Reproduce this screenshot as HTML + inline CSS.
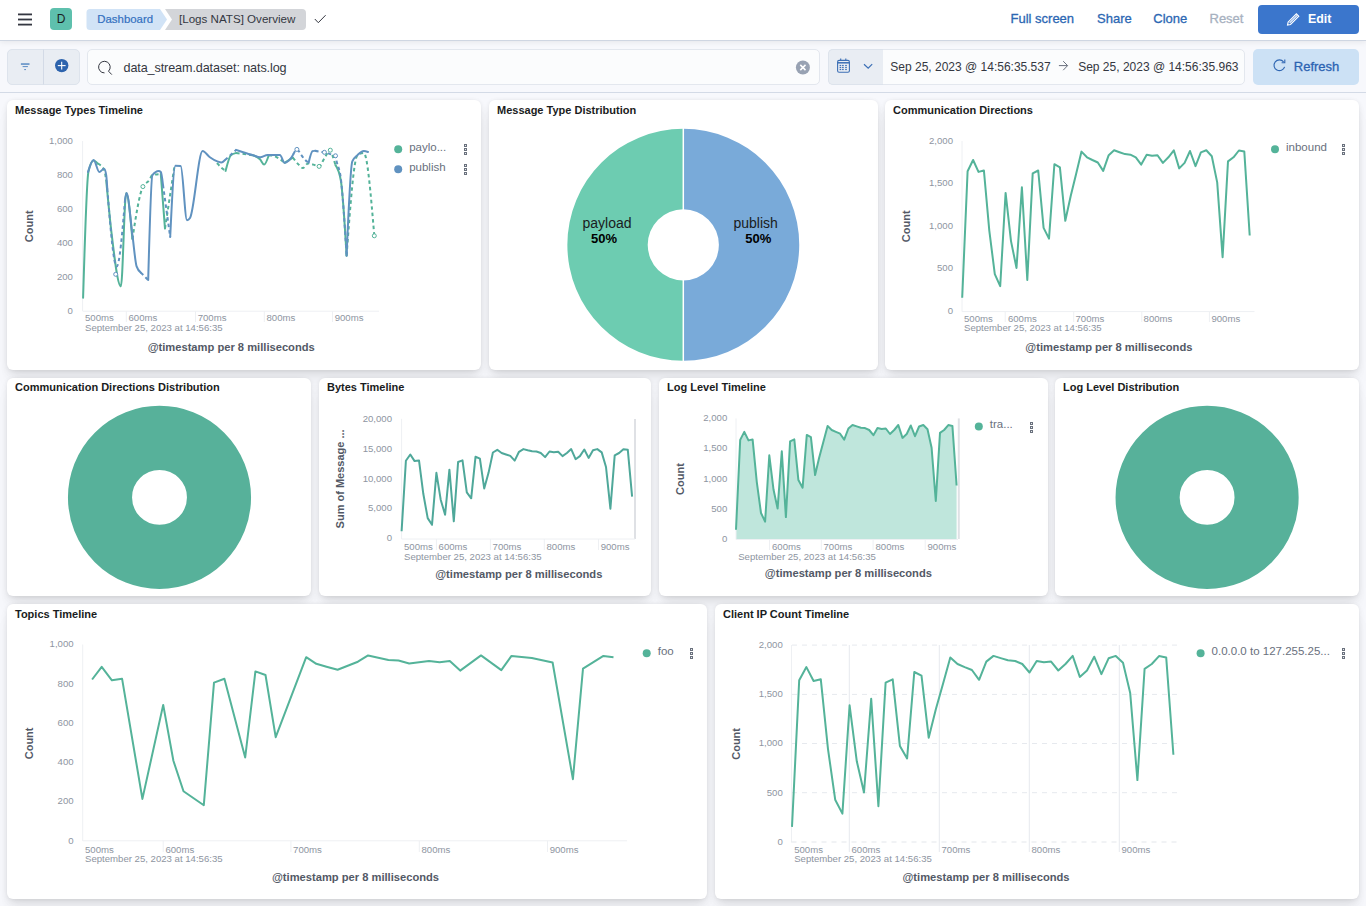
<!DOCTYPE html>
<html><head><meta charset="utf-8">
<style>
*{box-sizing:border-box;margin:0;padding:0}
html,body{width:1366px;height:906px;overflow:hidden;background:#f7f8fc;font-family:"Liberation Sans",sans-serif;position:relative}
.abs{position:absolute}
.hdr{left:0;top:0;width:1366px;height:40px;background:#fff;box-shadow:0 1px 0 #cfd6e2,0 2px 6px rgba(0,0,0,.08)}
.t{position:absolute;white-space:nowrap;line-height:1}
.panel{position:absolute;background:#fff;border-radius:6px;box-shadow:0 0.9px 4px -1px rgba(0,0,0,.08),0 2.6px 8px -1px rgba(0,0,0,.06),0 5.7px 12px -1px rgba(0,0,0,.045),0 15px 15px -1px rgba(0,0,0,.04)}
.ptitle{position:absolute;left:8px;top:4px;font-size:11px;font-weight:bold;color:#1a1c21;white-space:nowrap}
svg{position:absolute;left:0;top:0}
</style></head><body>
<!-- header -->
<div class="abs hdr"></div>
<div class="abs" style="left:0;top:92px;width:1366px;height:1px;background:#d3dae6"></div>
<div class="abs" style="left:7px;top:49px;width:73px;height:36px;border-radius:5px;background:#e9edf3;border:1px solid #dde3ec"></div>
<div class="abs" style="left:87px;top:49px;width:733px;height:36px;border-radius:5px;background:#fbfcfd;border:1px solid #e3e7ee"></div>
<div class="abs" style="left:828px;top:49px;width:417px;height:36px;border-radius:5px;background:#fbfcfd;border:1px solid #e3e7ee"></div>
<div class="abs" style="left:828px;top:49px;width:55px;height:36px;border-radius:5px 0 0 5px;background:#e9edf3;border:1px solid #dde3ec;border-right:none"></div>
<div class="abs" style="left:1253px;top:49px;width:106px;height:36px;border-radius:5px;background:#cce1f5"></div>
<div class="abs" style="left:1258px;top:5px;width:101px;height:28.5px;border-radius:4px;background:#3b76cc"></div>
<svg width="1366" height="100" style="left:0;top:0">
<g fill="#343741"><rect x="18" y="13.5" width="14" height="1.8"/><rect x="18" y="18.6" width="14" height="1.8"/><rect x="18" y="23.7" width="14" height="1.8"/></g>
<rect x="50" y="8" width="22" height="22" rx="4" fill="#5ec0ad"/>
<text x="61" y="23.3" font-size="12" text-anchor="middle" fill="#1a1c21" font-family="Liberation Sans">D</text>
<path d="M90 9 H160 L167 19.5 L160 30 H90 Q86.5 30 86.5 26.5 V12.5 Q86.5 9 90 9Z" fill="#d1e3f6"/>
<path d="M165 9 H302 Q306 9 306 13 V26 Q306 30 302 30 H165 L172 19.5Z" fill="#d3d5d9"/>
<path d="M314.8 19 L318.3 22.7 L325.6 15.2" fill="none" stroke="#343741" stroke-width="1"/>
<text x="97.3" y="23.3" font-size="11.4" fill="#3370c0" stroke="#3370c0" stroke-width="0.2" font-family="Liberation Sans">Dashboard</text>
<text x="179" y="23.3" font-size="11.6" fill="#343741" font-family="Liberation Sans">[Logs NATS] Overview</text>
<g font-family="Liberation Sans" font-size="13" fill="#2c67b3" stroke="#2c67b3" stroke-width="0.3">
<text x="1010.5" y="22.9">Full screen</text>
<text x="1097" y="22.9">Share</text>
<text x="1153.3" y="22.9">Clone</text>
<text x="1209.5" y="22.9" fill="#a7b1c0" stroke="#a7b1c0">Reset</text>
</g>
<text x="1308" y="22.9" font-size="12.4" font-weight="bold" fill="#fff" font-family="Liberation Sans">Edit</text>
<g transform="translate(1293.2,19.4) rotate(-45)" fill="none" stroke="#fff" stroke-width="1.1"><path d="M-5.5,-1.7 H6.2 V1.7 H-5.5 L-8,0 Z"/><line x1="-5" y1="0" x2="6" y2="0"/></g>
<!-- filter bar icons -->
<line x1="43.5" y1="49.5" x2="43.5" y2="84.5" stroke="#d3dae6" stroke-width="1"/>
<g fill="#6a96c9"><rect x="20.9" y="63.2" width="8.6" height="1.7"/><rect x="22.6" y="66" width="5.3" height="1.1"/><rect x="24.2" y="69" width="1.8" height="1.1"/></g>
<circle cx="61.7" cy="65.6" r="6.7" fill="#2d63ad"/>
<g stroke="#fff" stroke-width="1.1"><line x1="57.8" y1="65.6" x2="65.6" y2="65.6"/><line x1="61.7" y1="61.7" x2="61.7" y2="69.5"/></g>
<path d="M104.5,72.9 A5.8,5.8 0 1,1 108.5,71.2 L111.8,74.6" fill="none" stroke="#343741" stroke-width="1"/>
<text x="123.5" y="72" font-size="12.6" letter-spacing="-0.1" fill="#343741" font-family="Liberation Sans">data_stream.dataset: nats.log</text>
<circle cx="802.9" cy="67.5" r="7" fill="#98a2b3"/>
<g stroke="#fff" stroke-width="1.5"><line x1="800.3" y1="64.9" x2="805.5" y2="70.1"/><line x1="805.5" y1="64.9" x2="800.3" y2="70.1"/></g>
<g fill="none" stroke="#3c6fb5"><rect x="837.6" y="60.4" width="11.8" height="11.8" rx="1.5" stroke-width="1.1"/><line x1="837.6" y1="62.8" x2="849.4" y2="62.8" stroke-width="1.5"/><line x1="840.7" y1="58.6" x2="840.7" y2="61" stroke-width="1.1"/><line x1="845.8" y1="58.6" x2="845.8" y2="61" stroke-width="1.1"/></g>
<g fill="#3c6fb5"><rect x="839.6" y="64.9" width="1.6" height="1.2"/><rect x="842.1" y="64.9" width="1.6" height="1.2"/><rect x="845.2" y="64.9" width="1.6" height="1.2"/><rect x="839.6" y="66.9" width="1.6" height="1.2"/><rect x="842.1" y="66.9" width="1.6" height="1.2"/><rect x="845.2" y="66.9" width="1.6" height="1.2"/><rect x="839.6" y="68.9" width="1.6" height="1.2"/><rect x="842.1" y="68.9" width="1.6" height="1.2"/><rect x="845.2" y="68.9" width="1.6" height="1.2"/></g>
<path d="M864,64.2 L868.2,68.2 L872.2,64.2" fill="none" stroke="#3c6fb5" stroke-width="1.2"/>
<g font-family="Liberation Sans" font-size="12" fill="#343741">
<text x="890.3" y="71.2">Sep 25, 2023 @ 14:56:35.537</text>
<text x="1078.2" y="71.2">Sep 25, 2023 @ 14:56:35.963</text>
</g>
<g fill="none" stroke="#69707d" stroke-width="1"><line x1="1058.9" y1="65.6" x2="1067.5" y2="65.6"/><path d="M1063.2,61.2 L1067.6,65.6 L1063.2,70.2"/></g>
<path d="M1283.6,61.8 A5.4,5.4 0 1,0 1284.6,66.8" fill="none" stroke="#2f66b2" stroke-width="1.1"/>
<path d="M1284.8,59.6 V62.8 H1281.6" fill="none" stroke="#2f66b2" stroke-width="1.1"/>
<text x="1293.8" y="70.8" font-size="13" fill="#2b63b2" stroke="#2b63b2" stroke-width="0.3" font-family="Liberation Sans">Refresh</text>
</svg>

<!-- panels -->
<div class="panel" style="left:7px;top:100px;width:474px;height:270px"><div class="ptitle">Message Types Timeline</div></div>
<div class="panel" style="left:489px;top:100px;width:389px;height:270px"><div class="ptitle">Message Type Distribution</div></div>
<div class="panel" style="left:885px;top:100px;width:474px;height:270px"><div class="ptitle">Communication Directions</div></div>
<div class="panel" style="left:7px;top:378px;width:304px;height:218px"><div class="ptitle" style="top:3px">Communication Directions Distribution</div></div>
<div class="panel" style="left:319px;top:378px;width:332px;height:218px"><div class="ptitle" style="top:3px">Bytes Timeline</div></div>
<div class="panel" style="left:659px;top:378px;width:389px;height:218px"><div class="ptitle" style="top:3px">Log Level Timeline</div></div>
<div class="panel" style="left:1055px;top:378px;width:304px;height:218px"><div class="ptitle" style="top:3px">Log Level Distribution</div></div>
<div class="panel" style="left:7px;top:604px;width:700px;height:295px"><div class="ptitle">Topics Timeline</div></div>
<div class="panel" style="left:715px;top:604px;width:644px;height:295px"><div class="ptitle">Client IP Count Timeline</div></div>

<!-- charts overlay -->
<svg id="charts" width="1366" height="906" viewBox="0 0 1366 906">
<line x1="962.0" y1="141.0" x2="962.0" y2="311.6" stroke="#eef0f3" stroke-width="1"/>
<line x1="962.0" y1="311.6" x2="1254.5" y2="311.6" stroke="#eef0f3" stroke-width="1"/>
<line x1="1005.2" y1="311.6" x2="1005.2" y2="322.0" stroke="#eef0f3" stroke-width="1"/>
<line x1="1073.7" y1="311.6" x2="1073.7" y2="322.0" stroke="#eef0f3" stroke-width="1"/>
<line x1="1141.8" y1="311.6" x2="1141.8" y2="322.0" stroke="#eef0f3" stroke-width="1"/>
<line x1="1209.4" y1="311.6" x2="1209.4" y2="322.0" stroke="#eef0f3" stroke-width="1"/>
<text x="964.0" y="321.8" font-size="9.6" fill="#8e95a1" text-anchor="start" font-weight="normal" font-family='"Liberation Sans",sans-serif' >500ms</text>
<text x="1007.9" y="321.8" font-size="9.6" fill="#8e95a1" text-anchor="start" font-weight="normal" font-family='"Liberation Sans",sans-serif' >600ms</text>
<text x="1075.5" y="321.8" font-size="9.6" fill="#8e95a1" text-anchor="start" font-weight="normal" font-family='"Liberation Sans",sans-serif' >700ms</text>
<text x="1143.6" y="321.8" font-size="9.6" fill="#8e95a1" text-anchor="start" font-weight="normal" font-family='"Liberation Sans",sans-serif' >800ms</text>
<text x="1211.4" y="321.8" font-size="9.6" fill="#8e95a1" text-anchor="start" font-weight="normal" font-family='"Liberation Sans",sans-serif' >900ms</text>
<text x="964.0" y="330.9" font-size="9.6" fill="#8e95a1" text-anchor="start" font-weight="normal" font-family='"Liberation Sans",sans-serif' >September 25, 2023 at 14:56:35</text>
<text x="953.0" y="143.9" font-size="9.6" fill="#8e95a1" text-anchor="end" font-weight="normal" font-family='"Liberation Sans",sans-serif' >2,000</text>
<text x="953.0" y="186.3" font-size="9.6" fill="#8e95a1" text-anchor="end" font-weight="normal" font-family='"Liberation Sans",sans-serif' >1,500</text>
<text x="953.0" y="228.7" font-size="9.6" fill="#8e95a1" text-anchor="end" font-weight="normal" font-family='"Liberation Sans",sans-serif' >1,000</text>
<text x="953.0" y="271.1" font-size="9.6" fill="#8e95a1" text-anchor="end" font-weight="normal" font-family='"Liberation Sans",sans-serif' >500</text>
<text x="953.0" y="313.5" font-size="9.6" fill="#8e95a1" text-anchor="end" font-weight="normal" font-family='"Liberation Sans",sans-serif' >0</text>
<polyline points="962.2,297.7 967.6,171.3 973.1,160.0 978.5,171.9 983.9,170.5 989.3,230.6 994.8,274.2 1000.2,286.2 1005.6,192.9 1011.0,241.1 1016.5,268.0 1021.9,187.2 1027.3,279.9 1032.7,173.4 1038.2,170.5 1043.6,227.9 1049.0,238.6 1054.4,164.2 1059.9,167.3 1065.3,220.8 1070.7,196.0 1076.1,174.0 1081.5,151.6 1087.0,157.3 1092.4,160.0 1097.8,162.5 1103.2,170.9 1108.7,155.2 1114.1,150.3 1119.5,152.2 1125.0,154.1 1130.4,154.7 1135.8,157.3 1141.2,164.6 1146.7,154.7 1152.1,155.8 1157.5,155.2 1162.9,162.9 1168.4,157.3 1173.8,150.3 1179.2,168.4 1184.6,162.9 1190.0,151.0 1195.5,166.1 1200.9,152.4 1206.3,150.3 1211.8,156.2 1217.2,182.4 1222.6,257.3 1228.0,161.4 1233.5,157.3 1238.9,150.5 1244.3,151.6 1249.7,235.5" fill="none" stroke="#54b399" stroke-width="2" stroke-linejoin="round"/>
<text x="0" y="0" font-size="11" fill="#535966" text-anchor="middle" font-weight="bold" font-family='"Liberation Sans",sans-serif' transform="translate(905.8,226.3) rotate(-90)" dominant-baseline="central">Count</text>
<text x="1108.9" y="351.3" font-size="11.17" fill="#535966" text-anchor="middle" font-weight="bold" font-family='"Liberation Sans",sans-serif' >@timestamp per 8 milliseconds</text>
<circle cx="1275.0" cy="149.3" r="4" fill="#54b399"/>
<text x="1286.0" y="151.1" font-size="11.5" fill="#69707d" text-anchor="start" font-weight="normal" font-family='"Liberation Sans",sans-serif' >inbound</text>
<rect x="1342" y="144" width="3" height="3" fill="#6a717d"/><rect x="1343" y="145" width="1" height="1" fill="#e8eaee"/>
<rect x="1342" y="148" width="3" height="3" fill="#6a717d"/><rect x="1343" y="149" width="1" height="1" fill="#e8eaee"/>
<rect x="1342" y="152" width="3" height="3" fill="#6a717d"/><rect x="1343" y="153" width="1" height="1" fill="#e8eaee"/>
<path d="M736.0,538.9 L736.0,529.7 L740.2,439.9 L744.3,431.9 L748.5,440.4 L752.6,439.4 L756.8,482.1 L761.0,513.0 L765.1,521.6 L769.3,455.3 L773.5,489.5 L777.6,508.6 L781.8,451.2 L785.9,517.1 L790.1,441.4 L794.3,439.4 L798.4,480.1 L802.6,487.7 L806.8,434.9 L810.9,437.1 L815.1,475.1 L819.2,457.5 L823.4,441.8 L827.6,425.9 L831.7,430.0 L835.9,431.9 L840.1,433.7 L844.2,439.6 L848.4,428.5 L852.5,425.0 L856.7,426.4 L860.9,427.7 L865.0,428.1 L869.2,430.0 L873.4,435.2 L877.5,428.1 L881.7,428.9 L885.8,428.5 L890.0,434.0 L894.2,430.0 L898.3,425.0 L902.5,437.9 L906.7,434.0 L910.8,425.5 L915.0,436.2 L919.1,426.5 L923.3,425.0 L927.5,429.2 L931.6,447.8 L935.8,501.0 L940.0,432.9 L944.1,430.0 L948.3,425.1 L952.4,425.9 L956.6,485.5 L956.6,538.9 Z" fill="#bfe6dc"/>
<line x1="736.0" y1="418.4" x2="736.0" y2="539.5" stroke="#eef0f3" stroke-width="1"/>
<line x1="958.8" y1="418.4" x2="958.8" y2="539" stroke="#dfe1e5" stroke-width="2"/>
<line x1="736.0" y1="539.5" x2="958.0" y2="539.5" stroke="#eef0f3" stroke-width="1"/>
<line x1="769.5" y1="539.5" x2="769.5" y2="550.0" stroke="#eef0f3" stroke-width="1"/>
<line x1="821.3" y1="539.5" x2="821.3" y2="550.0" stroke="#eef0f3" stroke-width="1"/>
<line x1="873.1" y1="539.5" x2="873.1" y2="550.0" stroke="#eef0f3" stroke-width="1"/>
<line x1="925.2" y1="539.5" x2="925.2" y2="550.0" stroke="#eef0f3" stroke-width="1"/>
<text x="772.0" y="550.3" font-size="9.6" fill="#8e95a1" text-anchor="start" font-weight="normal" font-family='"Liberation Sans",sans-serif' >600ms</text>
<text x="823.5" y="550.3" font-size="9.6" fill="#8e95a1" text-anchor="start" font-weight="normal" font-family='"Liberation Sans",sans-serif' >700ms</text>
<text x="875.5" y="550.3" font-size="9.6" fill="#8e95a1" text-anchor="start" font-weight="normal" font-family='"Liberation Sans",sans-serif' >800ms</text>
<text x="927.5" y="550.3" font-size="9.6" fill="#8e95a1" text-anchor="start" font-weight="normal" font-family='"Liberation Sans",sans-serif' >900ms</text>
<text x="738.2" y="559.8" font-size="9.6" fill="#8e95a1" text-anchor="start" font-weight="normal" font-family='"Liberation Sans",sans-serif' >September 25, 2023 at 14:56:35</text>
<text x="727.3" y="421.3" font-size="9.6" fill="#8e95a1" text-anchor="end" font-weight="normal" font-family='"Liberation Sans",sans-serif' >2,000</text>
<text x="727.3" y="451.4" font-size="9.6" fill="#8e95a1" text-anchor="end" font-weight="normal" font-family='"Liberation Sans",sans-serif' >1,500</text>
<text x="727.3" y="481.5" font-size="9.6" fill="#8e95a1" text-anchor="end" font-weight="normal" font-family='"Liberation Sans",sans-serif' >1,000</text>
<text x="727.3" y="511.7" font-size="9.6" fill="#8e95a1" text-anchor="end" font-weight="normal" font-family='"Liberation Sans",sans-serif' >500</text>
<text x="727.3" y="541.8" font-size="9.6" fill="#8e95a1" text-anchor="end" font-weight="normal" font-family='"Liberation Sans",sans-serif' >0</text>
<polyline points="736.0,529.7 740.2,439.9 744.3,431.9 748.5,440.4 752.6,439.4 756.8,482.1 761.0,513.0 765.1,521.6 769.3,455.3 773.5,489.5 777.6,508.6 781.8,451.2 785.9,517.1 790.1,441.4 794.3,439.4 798.4,480.1 802.6,487.7 806.8,434.9 810.9,437.1 815.1,475.1 819.2,457.5 823.4,441.8 827.6,425.9 831.7,430.0 835.9,431.9 840.1,433.7 844.2,439.6 848.4,428.5 852.5,425.0 856.7,426.4 860.9,427.7 865.0,428.1 869.2,430.0 873.4,435.2 877.5,428.1 881.7,428.9 885.8,428.5 890.0,434.0 894.2,430.0 898.3,425.0 902.5,437.9 906.7,434.0 910.8,425.5 915.0,436.2 919.1,426.5 923.3,425.0 927.5,429.2 931.6,447.8 935.8,501.0 940.0,432.9 944.1,430.0 948.3,425.1 952.4,425.9 956.6,485.5" fill="none" stroke="#54b399" stroke-width="2" stroke-linejoin="round"/>
<text x="0" y="0" font-size="11" fill="#535966" text-anchor="middle" font-weight="bold" font-family='"Liberation Sans",sans-serif' transform="translate(680.4,479.1) rotate(-90)" dominant-baseline="central">Count</text>
<text x="848.4" y="577.3" font-size="11.17" fill="#535966" text-anchor="middle" font-weight="bold" font-family='"Liberation Sans",sans-serif' >@timestamp per 8 milliseconds</text>
<circle cx="978.8" cy="426.4" r="4" fill="#54b399"/>
<text x="989.8" y="428.2" font-size="11.5" fill="#69707d" text-anchor="start" font-weight="normal" font-family='"Liberation Sans",sans-serif' >tra...</text>
<rect x="1030" y="422" width="3" height="3" fill="#6a717d"/><rect x="1031" y="423" width="1" height="1" fill="#e8eaee"/>
<rect x="1030" y="426" width="3" height="3" fill="#6a717d"/><rect x="1031" y="427" width="1" height="1" fill="#e8eaee"/>
<rect x="1030" y="430" width="3" height="3" fill="#6a717d"/><rect x="1031" y="431" width="1" height="1" fill="#e8eaee"/>
<line x1="792" y1="645.1" x2="1180" y2="645.1" stroke="#e6e9ee" stroke-width="1" stroke-dasharray="5,5"/>
<line x1="792" y1="694.4" x2="1180" y2="694.4" stroke="#e6e9ee" stroke-width="1" stroke-dasharray="5,5"/>
<line x1="792" y1="743.5" x2="1180" y2="743.5" stroke="#e6e9ee" stroke-width="1" stroke-dasharray="5,5"/>
<line x1="792" y1="792.7" x2="1180" y2="792.7" stroke="#e6e9ee" stroke-width="1" stroke-dasharray="5,5"/>
<line x1="849.3" y1="645" x2="849.3" y2="852" stroke="#e6e9ee" stroke-width="1"/>
<line x1="939.3" y1="645" x2="939.3" y2="852" stroke="#e6e9ee" stroke-width="1"/>
<line x1="1029.3" y1="645" x2="1029.3" y2="852" stroke="#e6e9ee" stroke-width="1"/>
<line x1="1119.3" y1="645" x2="1119.3" y2="852" stroke="#e6e9ee" stroke-width="1"/>
<line x1="791.5" y1="645.0" x2="791.5" y2="842.5" stroke="#eef0f3" stroke-width="1"/>
<line x1="791.5" y1="842" x2="1180" y2="842" stroke="#e3e6eb" stroke-width="1" stroke-dasharray="5,5"/>
<text x="794.2" y="852.5" font-size="9.6" fill="#8e95a1" text-anchor="start" font-weight="normal" font-family='"Liberation Sans",sans-serif' >500ms</text>
<text x="851.5" y="852.5" font-size="9.6" fill="#8e95a1" text-anchor="start" font-weight="normal" font-family='"Liberation Sans",sans-serif' >600ms</text>
<text x="941.5" y="852.5" font-size="9.6" fill="#8e95a1" text-anchor="start" font-weight="normal" font-family='"Liberation Sans",sans-serif' >700ms</text>
<text x="1031.5" y="852.5" font-size="9.6" fill="#8e95a1" text-anchor="start" font-weight="normal" font-family='"Liberation Sans",sans-serif' >800ms</text>
<text x="1121.5" y="852.5" font-size="9.6" fill="#8e95a1" text-anchor="start" font-weight="normal" font-family='"Liberation Sans",sans-serif' >900ms</text>
<text x="794.2" y="861.8" font-size="9.6" fill="#8e95a1" text-anchor="start" font-weight="normal" font-family='"Liberation Sans",sans-serif' >September 25, 2023 at 14:56:35</text>
<text x="782.8" y="648.0" font-size="9.6" fill="#8e95a1" text-anchor="end" font-weight="normal" font-family='"Liberation Sans",sans-serif' >2,000</text>
<text x="782.8" y="697.3" font-size="9.6" fill="#8e95a1" text-anchor="end" font-weight="normal" font-family='"Liberation Sans",sans-serif' >1,500</text>
<text x="782.8" y="746.4" font-size="9.6" fill="#8e95a1" text-anchor="end" font-weight="normal" font-family='"Liberation Sans",sans-serif' >1,000</text>
<text x="782.8" y="795.6" font-size="9.6" fill="#8e95a1" text-anchor="end" font-weight="normal" font-family='"Liberation Sans",sans-serif' >500</text>
<text x="782.8" y="844.8" font-size="9.6" fill="#8e95a1" text-anchor="end" font-weight="normal" font-family='"Liberation Sans",sans-serif' >0</text>
<polyline points="792.0,826.9 799.2,680.3 806.4,667.1 813.6,681.0 820.8,679.3 828.0,749.1 835.2,799.7 842.4,813.6 849.6,705.3 856.8,761.3 864.0,792.5 871.2,698.7 878.4,806.3 885.6,682.7 892.7,679.3 899.9,745.9 907.1,758.4 914.3,672.0 921.5,675.6 928.7,737.7 935.9,708.9 943.1,683.4 950.3,657.4 957.5,664.0 964.7,667.1 971.9,670.0 979.1,679.8 986.3,661.6 993.5,655.9 1000.7,658.1 1007.9,660.3 1015.1,661.0 1022.3,664.0 1029.5,672.5 1036.7,661.0 1043.9,662.3 1051.1,661.6 1058.3,670.5 1065.5,664.0 1072.7,655.9 1079.8,676.9 1087.0,670.5 1094.2,656.7 1101.4,674.2 1108.6,658.3 1115.8,655.9 1123.0,662.7 1130.2,693.1 1137.4,780.1 1144.6,668.8 1151.8,664.0 1159.0,656.1 1166.2,657.4 1173.4,754.8" fill="none" stroke="#54b399" stroke-width="2" stroke-linejoin="round"/>
<text x="0" y="0" font-size="11" fill="#535966" text-anchor="middle" font-weight="bold" font-family='"Liberation Sans",sans-serif' transform="translate(735.9,743.9) rotate(-90)" dominant-baseline="central">Count</text>
<text x="986.0" y="880.7" font-size="11.17" fill="#535966" text-anchor="middle" font-weight="bold" font-family='"Liberation Sans",sans-serif' >@timestamp per 8 milliseconds</text>
<circle cx="1200.6" cy="653.3" r="4" fill="#54b399"/>
<text x="1211.6" y="655.1" font-size="11.5" fill="#69707d" text-anchor="start" font-weight="normal" font-family='"Liberation Sans",sans-serif' >0.0.0.0 to 127.255.25...</text>
<rect x="1342" y="648" width="3" height="3" fill="#6a717d"/><rect x="1343" y="649" width="1" height="1" fill="#e8eaee"/>
<rect x="1342" y="652" width="3" height="3" fill="#6a717d"/><rect x="1343" y="653" width="1" height="1" fill="#e8eaee"/>
<rect x="1342" y="656" width="3" height="3" fill="#6a717d"/><rect x="1343" y="657" width="1" height="1" fill="#e8eaee"/>
<line x1="401.6" y1="418.8" x2="401.6" y2="539.0" stroke="#eef0f3" stroke-width="1"/>
<line x1="635" y1="419" x2="635" y2="539" stroke="#dfe1e5" stroke-width="2"/>
<line x1="401.6" y1="539.0" x2="635.0" y2="539.0" stroke="#eef0f3" stroke-width="1"/>
<line x1="436.4" y1="539.0" x2="436.4" y2="550.0" stroke="#eef0f3" stroke-width="1"/>
<line x1="490.4" y1="539.0" x2="490.4" y2="550.0" stroke="#eef0f3" stroke-width="1"/>
<line x1="544.3" y1="539.0" x2="544.3" y2="550.0" stroke="#eef0f3" stroke-width="1"/>
<line x1="598.5" y1="539.0" x2="598.5" y2="550.0" stroke="#eef0f3" stroke-width="1"/>
<text x="404.0" y="550.2" font-size="9.6" fill="#8e95a1" text-anchor="start" font-weight="normal" font-family='"Liberation Sans",sans-serif' >500ms</text>
<text x="438.6" y="550.2" font-size="9.6" fill="#8e95a1" text-anchor="start" font-weight="normal" font-family='"Liberation Sans",sans-serif' >600ms</text>
<text x="492.6" y="550.2" font-size="9.6" fill="#8e95a1" text-anchor="start" font-weight="normal" font-family='"Liberation Sans",sans-serif' >700ms</text>
<text x="546.5" y="550.2" font-size="9.6" fill="#8e95a1" text-anchor="start" font-weight="normal" font-family='"Liberation Sans",sans-serif' >800ms</text>
<text x="600.7" y="550.2" font-size="9.6" fill="#8e95a1" text-anchor="start" font-weight="normal" font-family='"Liberation Sans",sans-serif' >900ms</text>
<text x="404.0" y="559.6" font-size="9.6" fill="#8e95a1" text-anchor="start" font-weight="normal" font-family='"Liberation Sans",sans-serif' >September 25, 2023 at 14:56:35</text>
<text x="392.0" y="421.7" font-size="9.6" fill="#8e95a1" text-anchor="end" font-weight="normal" font-family='"Liberation Sans",sans-serif' >20,000</text>
<text x="392.0" y="451.6" font-size="9.6" fill="#8e95a1" text-anchor="end" font-weight="normal" font-family='"Liberation Sans",sans-serif' >15,000</text>
<text x="392.0" y="481.5" font-size="9.6" fill="#8e95a1" text-anchor="end" font-weight="normal" font-family='"Liberation Sans",sans-serif' >10,000</text>
<text x="392.0" y="511.4" font-size="9.6" fill="#8e95a1" text-anchor="end" font-weight="normal" font-family='"Liberation Sans",sans-serif' >5,000</text>
<text x="392.0" y="541.3" font-size="9.6" fill="#8e95a1" text-anchor="end" font-weight="normal" font-family='"Liberation Sans",sans-serif' >0</text>
<polyline points="401.6,531.2 405.9,460.8 410.3,454.5 414.6,461.1 419.0,460.4 423.3,493.8 427.7,518.1 432.0,524.8 436.4,472.8 440.7,499.7 445.1,514.7 449.4,469.7 453.8,521.3 458.1,462.0 462.5,460.4 466.8,492.3 471.2,498.3 475.5,456.8 479.9,458.6 484.2,488.4 488.6,472.6 492.9,452.5 497.3,449.8 501.6,453.0 506.0,454.5 510.3,455.9 514.7,460.6 519.0,451.8 523.4,449.1 527.7,450.2 532.1,451.2 536.4,451.5 540.8,453.0 545.1,457.1 549.5,451.5 553.8,452.2 558.2,451.8 562.5,456.1 566.9,453.0 571.2,449.1 575.6,459.2 579.9,456.1 584.3,449.5 588.6,457.9 593.0,450.3 597.3,449.1 601.7,452.4 606.0,467.0 610.4,508.7 614.7,455.3 619.1,453.0 623.4,449.2 627.8,449.8 632.1,496.6" fill="none" stroke="#4fa89a" stroke-width="2" stroke-linejoin="round"/>
<text x="0" y="0" font-size="11" fill="#535966" text-anchor="middle" font-weight="bold" font-family='"Liberation Sans",sans-serif' transform="translate(339.7,478.9) rotate(-90)" dominant-baseline="central">Sum of Message ...</text>
<text x="518.8" y="577.8" font-size="11.17" fill="#535966" text-anchor="middle" font-weight="bold" font-family='"Liberation Sans",sans-serif' >@timestamp per 8 milliseconds</text>
<line x1="82.7" y1="644.5" x2="82.7" y2="841.0" stroke="#eef0f3" stroke-width="1"/>
<line x1="82.7" y1="840.8" x2="627.0" y2="840.8" stroke="#eef0f3" stroke-width="1"/>
<line x1="163.2" y1="840.8" x2="163.2" y2="852.0" stroke="#eef0f3" stroke-width="1"/>
<line x1="290.9" y1="840.8" x2="290.9" y2="852.0" stroke="#eef0f3" stroke-width="1"/>
<line x1="419.3" y1="840.8" x2="419.3" y2="852.0" stroke="#eef0f3" stroke-width="1"/>
<line x1="547.5" y1="840.8" x2="547.5" y2="852.0" stroke="#eef0f3" stroke-width="1"/>
<text x="85.0" y="853.1" font-size="9.6" fill="#8e95a1" text-anchor="start" font-weight="normal" font-family='"Liberation Sans",sans-serif' >500ms</text>
<text x="165.4" y="853.1" font-size="9.6" fill="#8e95a1" text-anchor="start" font-weight="normal" font-family='"Liberation Sans",sans-serif' >600ms</text>
<text x="293.1" y="853.1" font-size="9.6" fill="#8e95a1" text-anchor="start" font-weight="normal" font-family='"Liberation Sans",sans-serif' >700ms</text>
<text x="421.5" y="853.1" font-size="9.6" fill="#8e95a1" text-anchor="start" font-weight="normal" font-family='"Liberation Sans",sans-serif' >800ms</text>
<text x="549.7" y="853.1" font-size="9.6" fill="#8e95a1" text-anchor="start" font-weight="normal" font-family='"Liberation Sans",sans-serif' >900ms</text>
<text x="85.0" y="861.8" font-size="9.6" fill="#8e95a1" text-anchor="start" font-weight="normal" font-family='"Liberation Sans",sans-serif' >September 25, 2023 at 14:56:35</text>
<text x="73.6" y="647.4" font-size="9.6" fill="#8e95a1" text-anchor="end" font-weight="normal" font-family='"Liberation Sans",sans-serif' >1,000</text>
<text x="73.6" y="686.7" font-size="9.6" fill="#8e95a1" text-anchor="end" font-weight="normal" font-family='"Liberation Sans",sans-serif' >800</text>
<text x="73.6" y="725.9" font-size="9.6" fill="#8e95a1" text-anchor="end" font-weight="normal" font-family='"Liberation Sans",sans-serif' >600</text>
<text x="73.6" y="765.2" font-size="9.6" fill="#8e95a1" text-anchor="end" font-weight="normal" font-family='"Liberation Sans",sans-serif' >400</text>
<text x="73.6" y="804.4" font-size="9.6" fill="#8e95a1" text-anchor="end" font-weight="normal" font-family='"Liberation Sans",sans-serif' >200</text>
<text x="73.6" y="843.7" font-size="9.6" fill="#8e95a1" text-anchor="end" font-weight="normal" font-family='"Liberation Sans",sans-serif' >0</text>
<polyline points="92.1,679.5 101.7,666.8 111.9,680.3 122.1,678.8 142.4,798.9 163.2,704.9 173.4,760.8 183.5,791.2 203.8,805.2 214.0,682.6 224.4,678.8 245.2,757.5 255.4,671.4 265.5,675.0 275.7,737.2 306.2,657.2 316.3,663.8 326.5,666.8 337.6,669.8 357.9,661.7 368.1,655.4 388.4,660.0 398.5,660.5 409.2,663.5 429.0,661.0 439.6,662.2 449.8,661.0 460.2,670.6 481.0,655.4 501.3,670.1 511.5,655.9 531.8,657.9 552.6,662.5 572.9,779.2 583.0,668.6 603.4,655.9 613.5,657.2" fill="none" stroke="#54b399" stroke-width="2" stroke-linejoin="round"/>
<text x="0" y="0" font-size="11" fill="#535966" text-anchor="middle" font-weight="bold" font-family='"Liberation Sans",sans-serif' transform="translate(28.5,743.4) rotate(-90)" dominant-baseline="central">Count</text>
<text x="355.5" y="880.8" font-size="11.17" fill="#535966" text-anchor="middle" font-weight="bold" font-family='"Liberation Sans",sans-serif' >@timestamp per 8 milliseconds</text>
<circle cx="646.7" cy="653.2" r="4" fill="#54b399"/>
<text x="657.7" y="655.0" font-size="11.5" fill="#69707d" text-anchor="start" font-weight="normal" font-family='"Liberation Sans",sans-serif' >foo</text>
<rect x="690" y="648" width="3" height="3" fill="#6a717d"/><rect x="691" y="649" width="1" height="1" fill="#e8eaee"/>
<rect x="690" y="652" width="3" height="3" fill="#6a717d"/><rect x="691" y="653" width="1" height="1" fill="#e8eaee"/>
<rect x="690" y="656" width="3" height="3" fill="#6a717d"/><rect x="691" y="657" width="1" height="1" fill="#e8eaee"/>
<line x1="82.6" y1="141.0" x2="82.6" y2="311.0" stroke="#eef0f3" stroke-width="1"/>
<line x1="82.6" y1="311.2" x2="379.0" y2="311.2" stroke="#eef0f3" stroke-width="1"/>
<line x1="126.3" y1="311.2" x2="126.3" y2="322.0" stroke="#eef0f3" stroke-width="1"/>
<line x1="195.5" y1="311.2" x2="195.5" y2="322.0" stroke="#eef0f3" stroke-width="1"/>
<line x1="264.3" y1="311.2" x2="264.3" y2="322.0" stroke="#eef0f3" stroke-width="1"/>
<line x1="332.5" y1="311.2" x2="332.5" y2="322.0" stroke="#eef0f3" stroke-width="1"/>
<text x="85.0" y="321.4" font-size="9.6" fill="#8e95a1" text-anchor="start" font-weight="normal" font-family='"Liberation Sans",sans-serif' >500ms</text>
<text x="128.5" y="321.4" font-size="9.6" fill="#8e95a1" text-anchor="start" font-weight="normal" font-family='"Liberation Sans",sans-serif' >600ms</text>
<text x="197.7" y="321.4" font-size="9.6" fill="#8e95a1" text-anchor="start" font-weight="normal" font-family='"Liberation Sans",sans-serif' >700ms</text>
<text x="266.5" y="321.4" font-size="9.6" fill="#8e95a1" text-anchor="start" font-weight="normal" font-family='"Liberation Sans",sans-serif' >800ms</text>
<text x="334.7" y="321.4" font-size="9.6" fill="#8e95a1" text-anchor="start" font-weight="normal" font-family='"Liberation Sans",sans-serif' >900ms</text>
<text x="85.0" y="331.0" font-size="9.6" fill="#8e95a1" text-anchor="start" font-weight="normal" font-family='"Liberation Sans",sans-serif' >September 25, 2023 at 14:56:35</text>
<text x="72.9" y="143.9" font-size="9.6" fill="#8e95a1" text-anchor="end" font-weight="normal" font-family='"Liberation Sans",sans-serif' >1,000</text>
<text x="72.9" y="177.8" font-size="9.6" fill="#8e95a1" text-anchor="end" font-weight="normal" font-family='"Liberation Sans",sans-serif' >800</text>
<text x="72.9" y="211.7" font-size="9.6" fill="#8e95a1" text-anchor="end" font-weight="normal" font-family='"Liberation Sans",sans-serif' >600</text>
<text x="72.9" y="245.7" font-size="9.6" fill="#8e95a1" text-anchor="end" font-weight="normal" font-family='"Liberation Sans",sans-serif' >400</text>
<text x="72.9" y="279.6" font-size="9.6" fill="#8e95a1" text-anchor="end" font-weight="normal" font-family='"Liberation Sans",sans-serif' >200</text>
<text x="72.9" y="313.5" font-size="9.6" fill="#8e95a1" text-anchor="end" font-weight="normal" font-family='"Liberation Sans",sans-serif' >0</text>
<path d="M83.1,297.8 C84.9,238.8 86.6,179.9 88.4,172.0 C90.1,164.3 91.9,160.4 93.6,160.4 C95.0,160.4 96.4,162.0 97.8,163.6" fill="none" stroke="#54b399" stroke-width="2" stroke-linejoin="round" stroke-linecap="round"/>
<path d="M106.2,180.3 C108.0,199.1 109.7,218.0 111.5,232.8 C114.6,259.1 117.8,286.3 120.9,286.3 C122.7,286.3 124.4,192.9 126.2,192.9 C128.3,192.9 130.3,216.0 132.4,239.1" fill="none" stroke="#54b399" stroke-width="2" stroke-linejoin="round" stroke-linecap="round"/>
<path d="M160.8,174.1 L165.0,228.6" fill="none" stroke="#54b399" stroke-width="2" stroke-linejoin="round" stroke-linecap="round"/>
<path d="M225.6,170.9 C227.4,163.8 229.1,156.7 230.9,155.2 C232.6,153.7 234.4,153.4 236.1,153.0" fill="none" stroke="#54b399" stroke-width="2" stroke-linejoin="round" stroke-linecap="round"/>
<path d="M252.9,155.2 C255.3,156.0 257.6,156.9 260.0,159.3 C261.4,160.7 262.7,164.6 264.1,164.6 C265.7,164.6 267.2,159.9 268.8,155.2" fill="none" stroke="#54b399" stroke-width="2" stroke-linejoin="round" stroke-linecap="round"/>
<path d="M284.6,162.8 L292.8,157.6" fill="none" stroke="#54b399" stroke-width="2" stroke-linejoin="round" stroke-linecap="round"/>
<path d="M335.5,165.2 C337.3,167.7 339.0,170.2 340.8,180.3 C342.7,191.3 344.7,223.5 346.6,255.7" fill="none" stroke="#54b399" stroke-width="2" stroke-linejoin="round" stroke-linecap="round"/>
<path d="M97.8,163.6 C99.9,164.7 102.0,165.7 104.1,169.9 C104.8,171.3 105.5,175.8 106.2,180.3" fill="none" stroke="#54b399" stroke-width="2" stroke-dasharray="3.5,3" />
<path d="M132.4,239.1 C135.9,216.3 139.4,193.6 142.9,186.6 C145.0,182.4 147.1,183.3 149.2,180.3 C150.3,178.8 151.3,175.4 152.4,175.1 C155.2,174.4 158.0,174.3 160.8,174.1" fill="none" stroke="#54b399" stroke-width="2" stroke-dasharray="3.5,3" />
<path d="M165.0,228.6 L174.4,166.7" fill="none" stroke="#54b399" stroke-width="2" stroke-dasharray="3.5,3" />
<path d="M217.0,163.0 C218.5,164.7 219.9,166.4 221.4,167.7 C222.8,169.0 224.2,169.9 225.6,170.9" fill="none" stroke="#54b399" stroke-width="2" stroke-dasharray="3.5,3" />
<path d="M236.1,153.0 L252.9,155.2" fill="none" stroke="#54b399" stroke-width="2" stroke-dasharray="3.5,3" />
<path d="M268.8,155.2 C270.4,155.3 271.9,155.4 273.5,155.8 C275.4,156.3 277.4,157.5 279.3,158.7 C281.1,159.8 282.8,161.3 284.6,162.8" fill="none" stroke="#54b399" stroke-width="2" stroke-dasharray="3.5,3" />
<path d="M292.8,157.6 C294.8,160.1 296.7,162.7 298.7,164.6 C300.1,166.0 301.4,168.1 302.8,168.1 C304.5,168.1 306.3,163.4 308.0,163.4 C309.8,163.4 311.5,164.1 313.3,164.6 C315.2,165.1 317.2,166.4 319.1,166.4 C320.9,166.4 322.6,160.8 324.4,158.2 C326.4,155.3 328.3,150.2 330.3,150.2 C331.3,150.2 332.2,154.7 333.2,157.6 C334.0,159.9 334.7,162.5 335.5,165.2" fill="none" stroke="#54b399" stroke-width="2" stroke-dasharray="3.5,3" />
<path d="M346.6,255.7 C350.2,206.6 353.9,157.5 357.5,155.1 C359.6,153.7 361.7,153.0 363.8,153.0 C367.3,153.0 370.8,194.4 374.3,235.8" fill="none" stroke="#54b399" stroke-width="2" stroke-dasharray="3.5,3" />
<path d="M88.0,172.0 C89.9,166.0 91.7,160.0 93.6,160.0 C95.5,160.0 97.4,172.0 99.3,172.0 C100.9,172.0 102.5,168.8 104.1,168.8 C104.8,168.8 105.5,170.9 106.2,175.1 C106.6,177.3 106.9,183.0 107.3,188.7" fill="none" stroke="#6092c0" stroke-width="2" stroke-linejoin="round" stroke-linecap="round"/>
<path d="M125.1,199.2 C125.6,196.1 126.1,192.9 126.6,192.9 C128.5,192.9 130.5,220.6 132.4,234.9 C133.8,245.2 135.2,262.3 136.6,266.4 C138.0,270.5 139.4,271.6 140.8,272.6" fill="none" stroke="#6092c0" stroke-width="2" stroke-linejoin="round" stroke-linecap="round"/>
<path d="M148.2,280.0 C149.6,228.5 151.0,177.0 152.4,175.1 C154.5,172.3 156.6,170.9 158.7,170.9 C159.4,170.9 160.1,171.3 160.8,172.0 C161.5,172.8 162.3,178.9 163.0,185.0" fill="none" stroke="#6092c0" stroke-width="2" stroke-linejoin="round" stroke-linecap="round"/>
<path d="M170.2,237.0 C171.9,201.3 173.7,165.7 175.4,165.7 C177.2,165.7 178.9,165.8 180.7,166.1 C182.8,166.4 184.9,220.2 187.0,220.2 C188.0,220.2 189.0,219.5 190.0,218.0 C194.2,211.8 198.4,151.0 202.6,151.0 C205.0,151.0 207.5,155.6 209.9,157.3 C212.4,159.1 214.8,160.5 217.3,161.4 C218.7,161.9 220.0,162.5 221.4,162.5 C222.6,162.5 223.8,161.2 225.0,160.0" fill="none" stroke="#6092c0" stroke-width="2" stroke-linejoin="round" stroke-linecap="round"/>
<path d="M236.1,149.9 C238.2,150.6 240.3,151.3 242.4,152.0 C245.9,153.1 249.4,154.2 252.9,155.2 C255.3,155.9 257.8,157.3 260.2,157.3 C262.7,157.3 265.1,154.9 267.6,154.9 C271.7,154.9 275.8,154.9 279.9,154.9 C281.5,154.9 283.0,162.8 284.6,162.8 C286.6,162.8 288.5,161.2 290.5,158.7 C291.5,157.5 292.4,155.8 293.4,154.1" fill="none" stroke="#6092c0" stroke-width="2" stroke-linejoin="round" stroke-linecap="round"/>
<path d="M308.6,162.8 C310.0,157.1 311.3,151.4 312.7,151.1 C313.5,150.9 314.3,150.9 315.1,150.8" fill="none" stroke="#6092c0" stroke-width="2" stroke-linejoin="round" stroke-linecap="round"/>
<path d="M346.6,255.7 C348.5,210.9 350.4,166.0 352.3,161.4 C354.0,157.2 355.8,156.8 357.5,155.1 C359.6,153.1 361.7,151.0 363.8,151.0 C365.2,151.0 366.6,151.5 368.0,152.0" fill="none" stroke="#6092c0" stroke-width="2" stroke-linejoin="round" stroke-linecap="round"/>
<path d="M107.3,188.7 C110.4,227.5 113.6,266.4 116.7,266.4 C119.5,266.4 122.3,232.8 125.1,199.2" fill="none" stroke="#6092c0" stroke-width="2" stroke-dasharray="3.5,3" />
<path d="M140.8,272.6 L148.2,280.0" fill="none" stroke="#6092c0" stroke-width="2" stroke-dasharray="3.5,3" />
<path d="M163.0,185.0 L170.2,237.0" fill="none" stroke="#6092c0" stroke-width="2" stroke-dasharray="3.5,3" />
<path d="M225.0,160.0 L236.1,149.9" fill="none" stroke="#6092c0" stroke-width="2" stroke-dasharray="3.5,3" />
<path d="M293.4,154.1 C294.6,151.8 295.7,149.4 296.9,149.4 C298.3,149.4 299.6,152.8 301.0,154.6 C302.2,156.1 303.3,158.0 304.5,159.3 C305.9,160.8 307.2,161.8 308.6,162.8" fill="none" stroke="#6092c0" stroke-width="2" stroke-dasharray="3.5,3" />
<path d="M315.1,150.8 C317.2,151.3 319.4,151.7 321.5,152.0 C322.5,152.1 323.4,152.1 324.4,152.3 C326.4,152.6 328.3,153.5 330.3,154.1 C332.0,154.6 333.8,154.7 335.5,155.8 C335.9,156.1 336.3,159.8 336.7,161.7 C338.1,168.1 339.4,167.4 340.8,178.2 C342.7,193.5 344.7,224.6 346.6,255.7" fill="none" stroke="#6092c0" stroke-width="2" stroke-dasharray="3.5,3" />
<circle cx="115.7" cy="274.3" r="2" fill="#fff" stroke="#6092c0" stroke-width="1"/>
<circle cx="142.9" cy="186.6" r="2" fill="#fff" stroke="#54b399" stroke-width="1"/>
<circle cx="296.9" cy="149.4" r="2" fill="#fff" stroke="#6092c0" stroke-width="1"/>
<circle cx="319.1" cy="166.4" r="2" fill="#fff" stroke="#54b399" stroke-width="1"/>
<circle cx="330.3" cy="150.2" r="2" fill="#fff" stroke="#54b399" stroke-width="1"/>
<circle cx="374.3" cy="235.8" r="2" fill="#fff" stroke="#54b399" stroke-width="1"/>
<circle cx="324.4" cy="152.3" r="2" fill="#fff" stroke="#6092c0" stroke-width="1"/>
<circle cx="335.5" cy="155.8" r="2" fill="#fff" stroke="#6092c0" stroke-width="1"/>
<text x="0" y="0" font-size="11" fill="#535966" text-anchor="middle" font-weight="bold" font-family='"Liberation Sans",sans-serif' transform="translate(28.5,226.3) rotate(-90)" dominant-baseline="central">Count</text>
<text x="231.2" y="350.8" font-size="11.17" fill="#535966" text-anchor="middle" font-weight="bold" font-family='"Liberation Sans",sans-serif' >@timestamp per 8 milliseconds</text>
<circle cx="398.2" cy="149.2" r="4" fill="#54b399"/>
<text x="409.2" y="151.0" font-size="11.5" fill="#69707d" text-anchor="start" font-weight="normal" font-family='"Liberation Sans",sans-serif' >paylo...</text>
<circle cx="398.2" cy="169.3" r="4" fill="#6092c0"/>
<text x="409.2" y="171.1" font-size="11.5" fill="#69707d" text-anchor="start" font-weight="normal" font-family='"Liberation Sans",sans-serif' >publish</text>
<rect x="464" y="144" width="3" height="3" fill="#6a717d"/><rect x="465" y="145" width="1" height="1" fill="#e8eaee"/>
<rect x="464" y="148" width="3" height="3" fill="#6a717d"/><rect x="465" y="149" width="1" height="1" fill="#e8eaee"/>
<rect x="464" y="152" width="3" height="3" fill="#6a717d"/><rect x="465" y="153" width="1" height="1" fill="#e8eaee"/>
<rect x="464" y="164" width="3" height="3" fill="#6a717d"/><rect x="465" y="165" width="1" height="1" fill="#e8eaee"/>
<rect x="464" y="168" width="3" height="3" fill="#6a717d"/><rect x="465" y="169" width="1" height="1" fill="#e8eaee"/>
<rect x="464" y="172" width="3" height="3" fill="#6a717d"/><rect x="465" y="173" width="1" height="1" fill="#e8eaee"/>
<path d="M683.3,128.8 A116.0,116.0 0 0 0 683.3,360.8 L683.3,280.4 A35.6,35.6 0 0 1 683.3,209.2 Z" fill="#6dccb1"/>
<path d="M683.3,128.8 A116.0,116.0 0 0 1 683.3,360.8 L683.3,280.4 A35.6,35.6 0 0 0 683.3,209.2 Z" fill="#79aad9"/>
<line x1="683.3" y1="127.8" x2="683.3" y2="361.8" stroke="#fff" stroke-width="1.5"/>
<text x="607.0" y="227.6" font-size="14" fill="#1a1c21" text-anchor="middle" font-weight="normal" font-family='"Liberation Sans",sans-serif' >payload</text>
<text x="604.0" y="242.5" font-size="13" fill="#000" text-anchor="middle" font-weight="bold" font-family='"Liberation Sans",sans-serif' >50%</text>
<text x="755.7" y="227.6" font-size="14" fill="#1a1c21" text-anchor="middle" font-weight="normal" font-family='"Liberation Sans",sans-serif' >publish</text>
<text x="758.2" y="242.5" font-size="13" fill="#000" text-anchor="middle" font-weight="bold" font-family='"Liberation Sans",sans-serif' >50%</text>
<circle cx="159.5" cy="497.4" r="59.5" fill="none" stroke="#57b19a" stroke-width="64.1"/>
<circle cx="1207.1" cy="497.4" r="59.5" fill="none" stroke="#57b19a" stroke-width="64.1"/>
</svg>
</body></html>
